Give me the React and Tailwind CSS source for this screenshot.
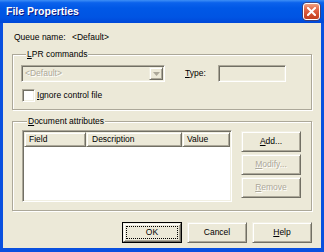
import React from "react";

const sunken =
  "border border-t-[#ACA899] border-l-[#ACA899] border-b-white border-r-white shadow-[inset_1px_1px_0_#716F64,inset_-1px_-1px_0_#F1EFE2]";
const raised =
  "border border-t-[#F1EFE2] border-l-[#F1EFE2] border-b-[#716F64] border-r-[#716F64] shadow-[inset_1px_1px_0_#fff,inset_-1px_-1px_0_#ACA899]";
const disabledText = "text-[#ACA899] [text-shadow:1px_1px_0_#fff]";
const etched =
  "border border-[#ACA899] shadow-[1px_1px_0_#fff,inset_1px_1px_0_#fff]";

function U({ children }) {
  return <span className="underline underline-offset-[1px]">{children}</span>;
}

function Btn({ children, disabled, className = "" }) {
  return (
    <div
      className={`w-[60px] h-[21px] bg-[#ECE9D8] flex items-center justify-center ${raised} ${
        disabled ? disabledText : ""
      } ${className}`}
    >
      {children}
    </div>
  );
}

function DefaultBtn({ children }) {
  return (
    <div className="w-[60px] h-[21px] border border-black flex">
      <div className={`flex-1 bg-[#ECE9D8] ${raised} p-[2px] flex`}>
        <div className="flex-1 border border-dotted border-black flex items-center justify-center">
          {children}
        </div>
      </div>
    </div>
  );
}

function CloseBtn() {
  return (
    <div className="w-[17px] h-[17px] rounded-[3px] border border-white bg-[linear-gradient(180deg,#F0A080_0%,#E2684A_35%,#D24E2E_70%,#C2401F_100%)] flex items-center justify-center shadow-[0_0_0_0.5px_#7A2A10]">
      <svg width="9" height="9" viewBox="0 0 9 9">
        <path d="M1 1 L8 8 M8 1 L1 8" stroke="#fff" strokeWidth="2" strokeLinecap="square" />
      </svg>
    </div>
  );
}

function HeaderCell({ children, className = "" }) {
  return (
    <div className={`h-full bg-[#ECE9D8] ${raised} flex items-center pl-[4px] ${className}`}>
      {children}
    </div>
  );
}

export default function App() {
  return (
    <div className="w-[324px] h-[252px] flex flex-col bg-[#0A50DF] font-['Liberation_Sans',Arial,sans-serif] text-[8.5px] leading-[11px] text-black overflow-hidden">
      {/* Title bar */}
      <div className="h-[23px] shrink-0 flex items-center pl-[6px] pr-[4px] bg-[linear-gradient(180deg,#3E8FF6_0%,#0B62EC_12%,#0058E6_35%,#0054E3_75%,#0048D8_100%)]">
        <span className="flex-1 text-white font-bold text-[10.5px] leading-[13px] [text-shadow:1px_1px_0_#0A1883]">
          File Properties
        </span>
        <CloseBtn />
      </div>

      {/* Body */}
      <div className="flex-1 flex flex-col mx-[3px] mb-[4px] bg-[#ECE9D8] px-[9px]">
        {/* Queue name */}
        <div className="mt-[8px] h-[12px] flex items-center pl-[2px]">
          <span className="w-[58px]">Queue name:</span>
          <span>&lt;Default&gt;</span>
        </div>

        {/* LPR commands */}
        <fieldset className={`mt-[5px] ${etched} px-[8px] pb-[7px]`}>
          <legend className="ml-[5px] px-[1px] leading-[12px] bg-[#ECE9D8]">
            <U>L</U>PR commands
          </legend>
          <div className="mt-[5px] h-[17px] flex items-center">
            <div className={`w-[144px] h-[17px] bg-[#ECE9D8] ${sunken} flex items-stretch p-[1px]`}>
              <div className={`flex-1 flex items-center pl-[2px] ${disabledText}`}>&lt;Default&gt;</div>
              <div className={`w-[14px] bg-[#ECE9D8] ${raised} flex items-center justify-center`}>
                <svg width="7" height="4" viewBox="0 0 7 4">
                  <path d="M0 0 H7 L3.5 4 Z" fill="#ACA899" />
                </svg>
              </div>
            </div>
            <span className="ml-[20px] w-[33px]">
              <U>T</U>ype:
            </span>
            <div className={`w-[68px] h-[17px] bg-[#ECE9D8] ${sunken}`} />
          </div>
          <div className="mt-[7px] h-[13px] flex items-center">
            <div className={`ml-[1px] w-[13px] h-[13px] bg-white ${sunken}`} />
            <span className="ml-[2px]">
              <U>I</U>gnore control file
            </span>
          </div>
        </fieldset>

        {/* Document attributes */}
        <fieldset className={`mt-[5px] ${etched} pl-[9px] pr-[10px] pb-[8px]`}>
          <legend className="ml-[5px] px-[1px] leading-[12px] bg-[#ECE9D8]">
            <U>D</U>ocument attributes
          </legend>
          <div className="mt-[3px] flex items-start">
            <div className={`w-[210px] h-[72px] bg-white ${sunken} p-[1px] flex flex-col`}>
              <div className="h-[15px] flex">
                <HeaderCell className="w-[62px]">Field</HeaderCell>
                <HeaderCell className="w-[96px] pl-[5px]">Description</HeaderCell>
                <HeaderCell className="w-[48px]">Value</HeaderCell>
              </div>
              <div className="flex-1 bg-white" />
            </div>
            <div className="ml-[9px] mt-[1px] flex flex-col gap-[2px]">
              <Btn>
                <span>
                  <U>A</U>dd...
                </span>
              </Btn>
              <Btn disabled>
                <span>
                  <U>M</U>odify...
                </span>
              </Btn>
              <Btn disabled>
                <span>
                  <U>R</U>emove
                </span>
              </Btn>
            </div>
          </div>
        </fieldset>

        {/* Bottom buttons */}
        <div className="mt-[11px] flex justify-end gap-[5px]">
          <DefaultBtn>OK</DefaultBtn>
          <Btn>Cancel</Btn>
          <Btn>
            <span>
              <U>H</U>elp
            </span>
          </Btn>
        </div>
      </div>
    </div>
  );
}
